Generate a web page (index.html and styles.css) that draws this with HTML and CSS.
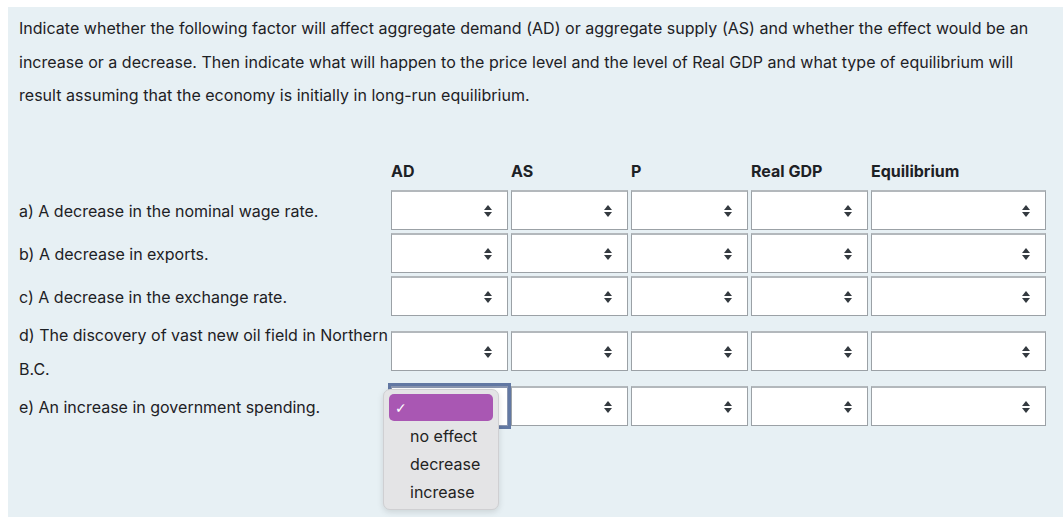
FILE: index.html
```html
<!DOCTYPE html>
<html>
<head>
<meta charset="utf-8">
<link rel="stylesheet" href="styles.css">
</head>
<body>
<div class="panel">
  <p class="prompt">Indicate whether the following factor will affect aggregate demand (AD) or aggregate supply (AS) and whether the effect would be an increase or a decrease. Then indicate what will happen to the price level and the level of Real GDP and what type of equilibrium will result assuming that the economy is initially in long-run equilibrium.</p>
  <div class="grid">
    <div class="head"></div>
    <div class="head">AD</div>
    <div class="head">AS</div>
    <div class="head">P</div>
    <div class="head">Real GDP</div>
    <div class="head">Equilibrium</div>

    <div class="label">a) A decrease in the nominal wage rate.</div>
    <div class="cell"><div class="sel"><span class="arrows"></span></div></div>
    <div class="cell"><div class="sel"><span class="arrows"></span></div></div>
    <div class="cell"><div class="sel"><span class="arrows"></span></div></div>
    <div class="cell"><div class="sel"><span class="arrows"></span></div></div>
    <div class="cell"><div class="sel wide"><span class="arrows"></span></div></div>

    <div class="label">b) A decrease in exports.</div>
    <div class="cell"><div class="sel"><span class="arrows"></span></div></div>
    <div class="cell"><div class="sel"><span class="arrows"></span></div></div>
    <div class="cell"><div class="sel"><span class="arrows"></span></div></div>
    <div class="cell"><div class="sel"><span class="arrows"></span></div></div>
    <div class="cell"><div class="sel wide"><span class="arrows"></span></div></div>

    <div class="label">c) A decrease in the exchange rate.</div>
    <div class="cell"><div class="sel"><span class="arrows"></span></div></div>
    <div class="cell"><div class="sel"><span class="arrows"></span></div></div>
    <div class="cell"><div class="sel"><span class="arrows"></span></div></div>
    <div class="cell"><div class="sel"><span class="arrows"></span></div></div>
    <div class="cell"><div class="sel wide"><span class="arrows"></span></div></div>

    <div class="label">d) The discovery of vast new oil field in Northern<br>B.C.</div>
    <div class="cell"><div class="sel"><span class="arrows"></span></div></div>
    <div class="cell"><div class="sel"><span class="arrows"></span></div></div>
    <div class="cell"><div class="sel"><span class="arrows"></span></div></div>
    <div class="cell"><div class="sel"><span class="arrows"></span></div></div>
    <div class="cell"><div class="sel wide"><span class="arrows"></span></div></div>

    <div class="label">e) An increase in government spending.</div>
    <div class="cell open">
      <div class="sel focused"></div>
      <div class="popup">
        <div class="opt current"><span class="check">&#10003;</span></div>
        <div class="opt">no effect</div>
        <div class="opt">decrease</div>
        <div class="opt">increase</div>
      </div>
    </div>
    <div class="cell"><div class="sel"><span class="arrows"></span></div></div>
    <div class="cell"><div class="sel"><span class="arrows"></span></div></div>
    <div class="cell"><div class="sel"><span class="arrows"></span></div></div>
    <div class="cell"><div class="sel wide"><span class="arrows"></span></div></div>
  </div>
</div>
</body>
</html>
```

FILE: styles.css
```css
html, body {
  margin: 0;
  padding: 0;
  background: #ffffff;
}
body {
  padding: 7px 0 0 8px;
  font-family: Inter, "Liberation Sans", Arial, sans-serif;
  color: #1d2125;
  font-size: 16px;
  overflow: hidden;
  height: 517px;
  box-sizing: border-box;
}
.panel {
  background: #e7f0f4;
  padding: 5px 0 0 11px;
  height: 510px;
  box-sizing: border-box;
}
.prompt {
  margin: 0;
  line-height: 33.5px;
  width: 1025px;
  letter-spacing: 0.02px;
}
.grid {
  margin-top: 48px;
  display: grid;
  grid-template-columns: 372px 120px 120px 120px 120px 178px;
  grid-auto-rows: auto;
}
.head {
  font-weight: 700;
  line-height: 20px;
  height: 20px;
  margin-bottom: 7.5px;
}
.label {
  line-height: 33.5px;
  align-self: center;
  white-space: nowrap;
  margin-top: 2px;
  margin-bottom: -2px;
}
.cell {
  align-self: center;
  padding: 1.5px 0;
}
.open {
  position: relative;
}
.sel {
  width: 117px;
  height: 40px;
  box-sizing: border-box;
  background: #ffffff;
  border: 1px solid #9ba1a6;
  border-top: 2px solid #b3b8bc;
  position: relative;
}
.sel.wide {
  width: 175px;
}
.sel.focused {
  border-color: #8a96b0;
  box-shadow: 0 0 0 3px #6278a3;
}
.arrows {
  position: absolute;
  right: 15px;
  top: 13px;
  width: 8px;
  height: 12px;
}
.arrows::before,
.arrows::after {
  content: "";
  position: absolute;
  left: 0;
  border-left: 4px solid transparent;
  border-right: 4px solid transparent;
}
.arrows::before {
  top: 0;
  border-bottom: 5px solid #343a40;
}
.arrows::after {
  bottom: 0;
  border-top: 5px solid #343a40;
}
.popup {
  position: absolute;
  left: -8px;
  top: 5px;
  width: 116px;
  height: 121px;
  box-sizing: border-box;
  background: #e4e4e6;
  border: 1px solid #cfcfd2;
  border-radius: 7px;
  box-shadow: 0 2px 6px rgba(0, 0, 0, 0.12);
  padding: 4px 5px;
  z-index: 5;
}
.opt {
  height: 28px;
  line-height: 28px;
  padding-left: 21px;
  color: #222222;
  font-size: 16px;
}
.opt.current {
  height: 27px;
  line-height: 27px;
  background: #a957b3;
  border-radius: 5px;
  padding-left: 6px;
  margin-bottom: 1px;
}
.check {
  color: #ffffff;
  font-size: 14px;
  font-weight: bold;
  font-family: "DejaVu Sans", sans-serif;
}
```
